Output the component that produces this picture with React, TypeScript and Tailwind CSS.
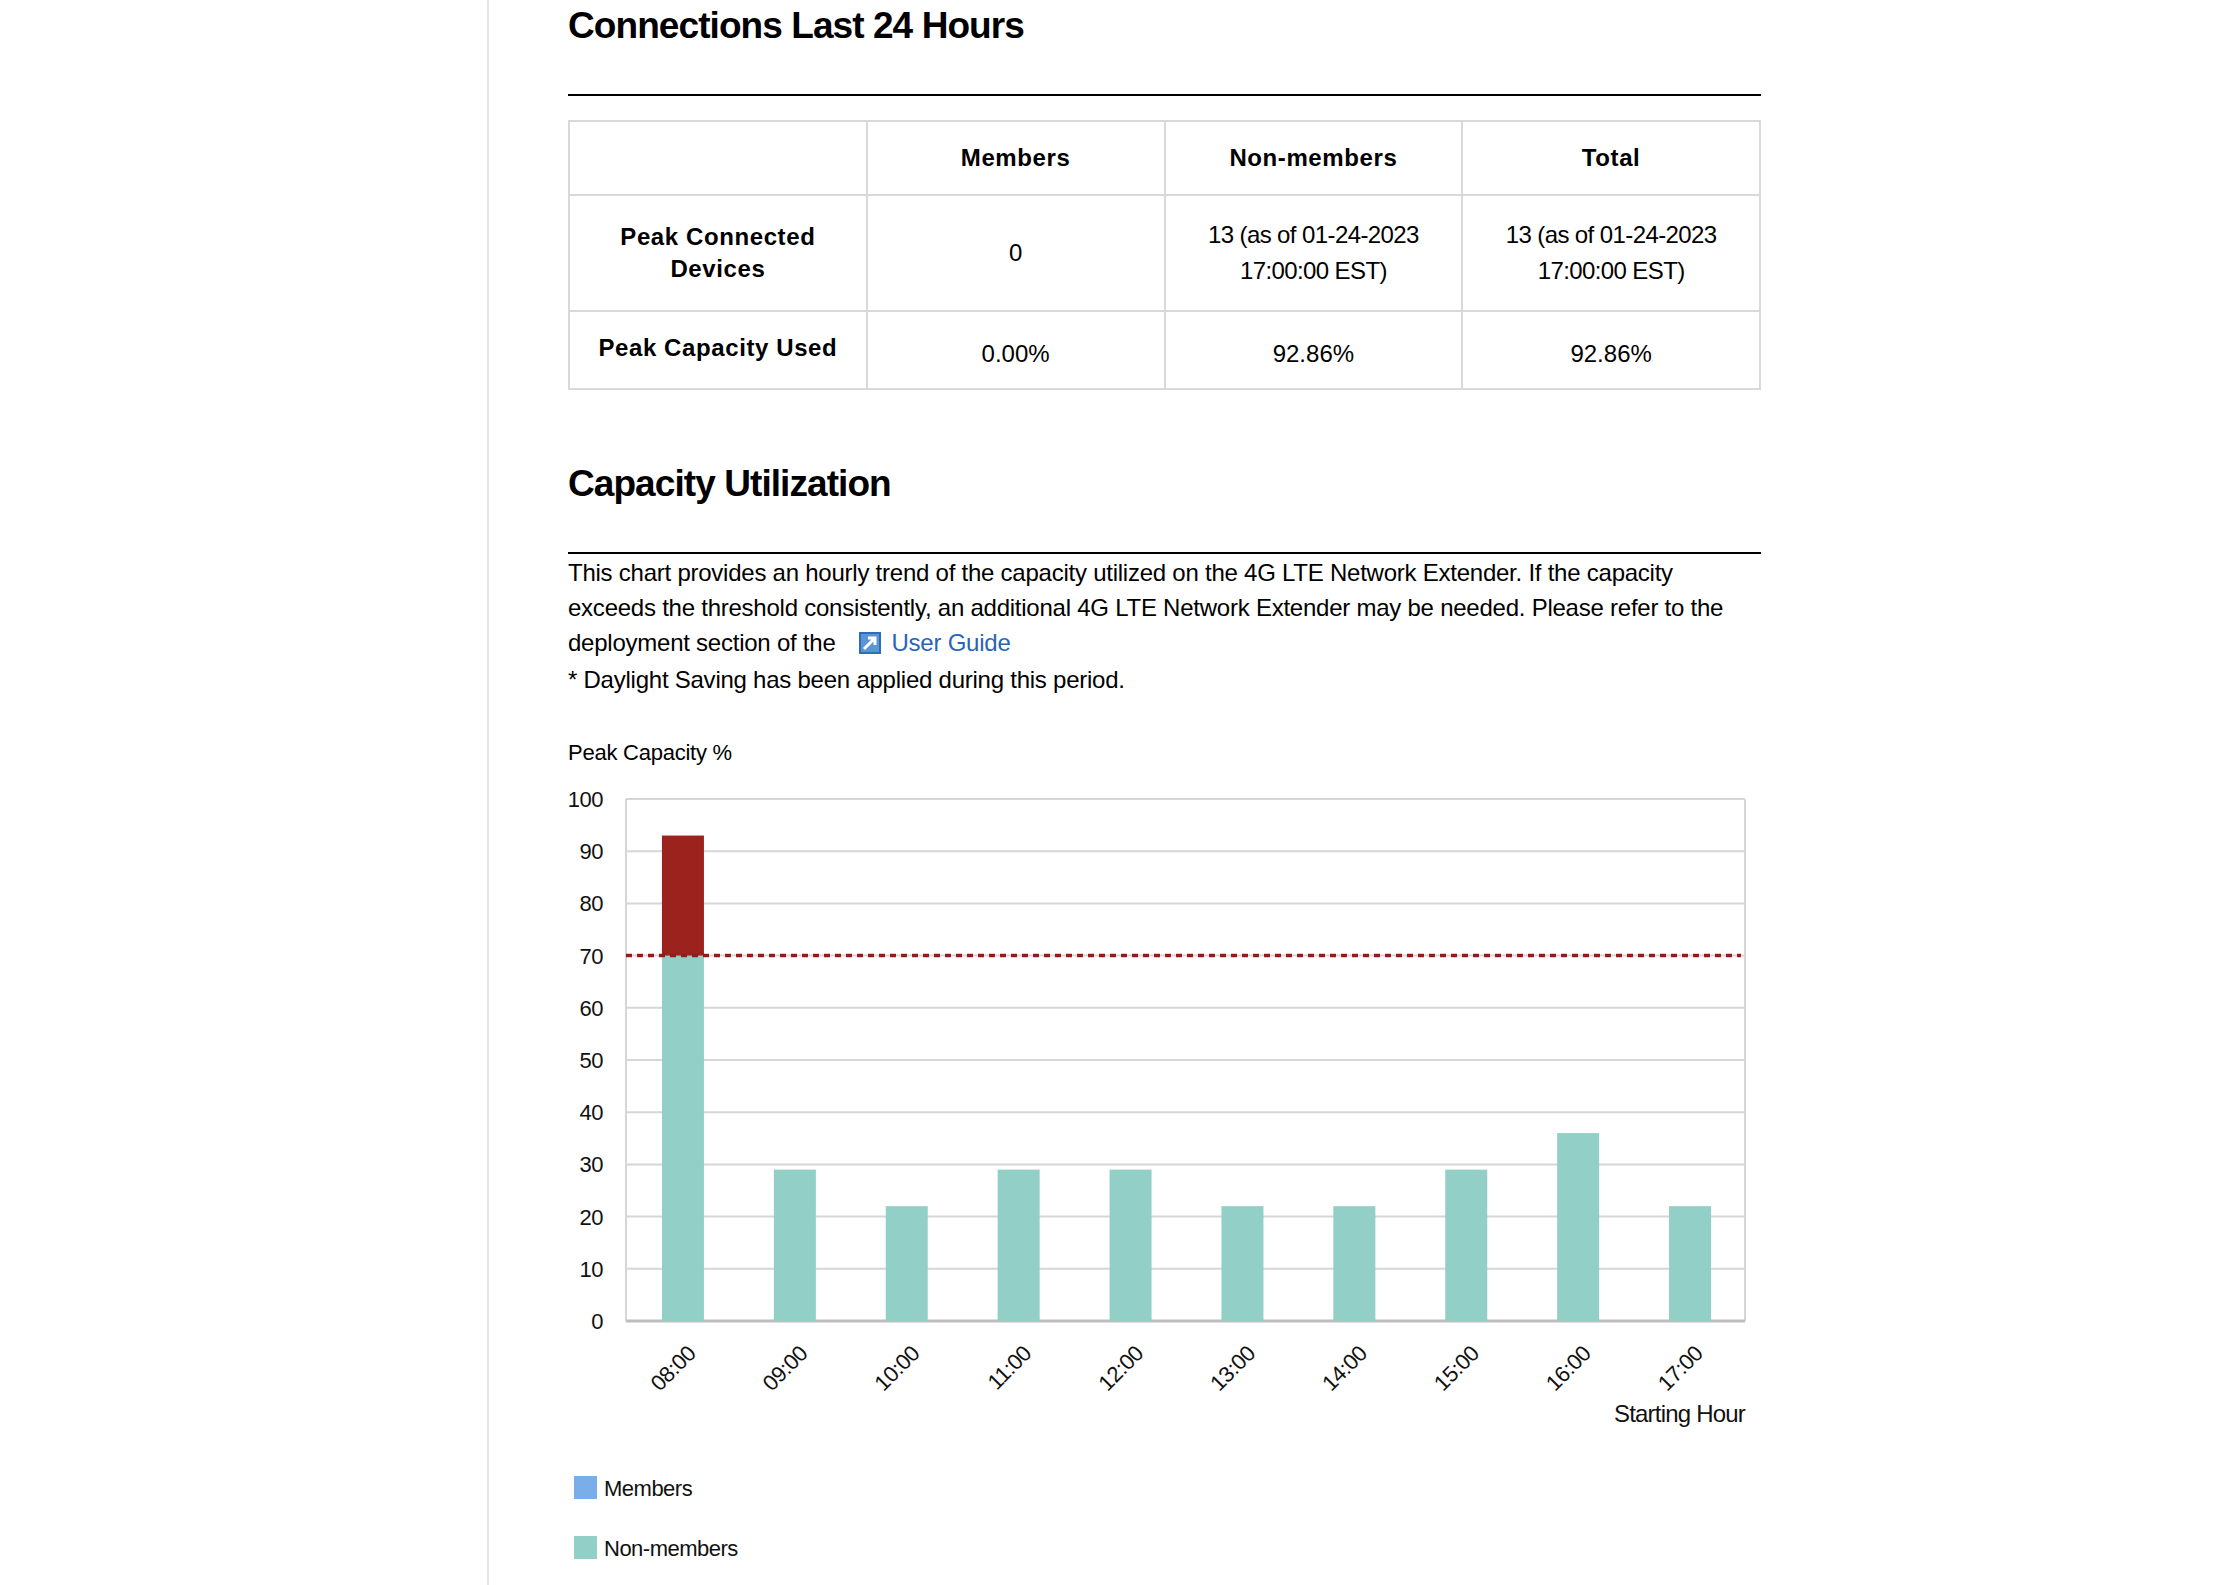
export default function App() {
  const bars = [93, 29, 22, 29, 29, 22, 22, 29, 36, 22];
  const labels = ["08:00","09:00","10:00","11:00","12:00","13:00","14:00","15:00","16:00","17:00"];
  const L = 628, R = 1747, T = 805, B = 1327;
  const W = R - L, H = B - T;
  const y = (v: number) => B - (v / 100) * H;
  const ox = 560;
  const font = { fontFamily: '"Liberation Sans", Arial, sans-serif' };
  return (
    <div className="w-[2223px] h-[1585px] bg-white flex overflow-hidden" style={font}>
      <div className="w-[489px] border-r-2 border-[#e5e5e5] h-full shrink-0" />
      <div className="w-[1193px] ml-[79px] text-black shrink-0">
        <h1 className="text-[37px] font-bold tracking-tight leading-none mt-[7px] h-[87px]">Connections Last 24 Hours</h1>
        <div className="h-[2px] bg-black" />
        <table className="mt-[24px] w-full border-collapse border-2 border-[#d9d9d9] text-center text-[24px]">
          <tbody>
            <tr className="h-[74px] font-bold tracking-wide">
              <td className="border-2 border-[#d9d9d9] w-1/4"></td>
              <td className="border-2 border-[#d9d9d9] w-1/4">Members</td>
              <td className="border-2 border-[#d9d9d9] w-1/4">Non-members</td>
              <td className="border-2 border-[#d9d9d9] w-1/4">Total</td>
            </tr>
            <tr className="h-[116px]">
              <td className="border-2 border-[#d9d9d9] font-bold tracking-wide leading-[32px]">Peak Connected<br />Devices</td>
              <td className="border-2 border-[#d9d9d9]">0</td>
              <td className="border-2 border-[#d9d9d9] leading-[36px] tracking-tight">13 (as of 01-24-2023<br />17:00:00 EST)</td>
              <td className="border-2 border-[#d9d9d9] leading-[36px] tracking-tight">13 (as of 01-24-2023<br />17:00:00 EST)</td>
            </tr>
            <tr className="h-[78px]">
              <td className="border-2 border-[#d9d9d9] font-bold tracking-wide align-top pt-[18px]">Peak Capacity Used</td>
              <td className="border-2 border-[#d9d9d9] pt-[8px]">0.00%</td>
              <td className="border-2 border-[#d9d9d9] pt-[8px]">92.86%</td>
              <td className="border-2 border-[#d9d9d9] pt-[8px]">92.86%</td>
            </tr>
          </tbody>
        </table>
        <h2 className="text-[37px] font-bold tracking-tight leading-none mt-[75px] h-[87px]">Capacity Utilization</h2>
        <div className="h-[2px] bg-black" />
        <div className="text-[24px] tracking-[-0.01em] leading-[35px] mt-[1px] whitespace-nowrap">
          <div>This chart provides an hourly trend of the capacity utilized on the 4G LTE Network Extender. If the capacity</div>
          <div>exceeds the threshold consistently, an additional 4G LTE Network Extender may be needed. Please refer to the</div>
          <div className="flex items-center">
            <span>deployment section of the</span>
            <svg width="24" height="24" viewBox="0 0 24 24" className="ml-[22px] mr-[10px]">
              <rect x="1" y="1" width="22" height="22" fill="#2f6db5" />
              <rect x="3" y="3" width="18" height="18" fill="#5b95d6" />
              <path d="M6 18 L16 8 M10 7 L17 7 L17 14" stroke="white" strokeWidth="3" fill="none" />
            </svg>
            <span className="text-[#2a64b8]">User Guide</span>
          </div>
          <div className="mt-[2px]">* Daylight Saving has been applied during this period.</div>
          <div className="mt-[38px] text-[22px]">Peak Capacity %</div>
        </div>
        <svg width="1240" height="820" viewBox={`${ox} 780 1240 820`} className="block mt-[4px] -ml-[10px]" style={font}>
          {[0,10,20,30,40,50,60,70,80,90,100].map((v) => (
            <g key={v}>
              <line x1={L} x2={R} y1={y(v)} y2={y(v)} stroke="#d6d6d6" strokeWidth="2" />
              <text x={605} y={y(v) + 8} textAnchor="end" fontSize="22" fill="#111" letterSpacing="-0.5">{v}</text>
            </g>
          ))}
          <line x1={L} x2={L} y1={T} y2={B} stroke="#d6d6d6" strokeWidth="2" />
          <line x1={R} x2={R} y1={T} y2={B} stroke="#d6d6d6" strokeWidth="2" />
          <line x1={L} x2={R} y1={B} y2={B} stroke="#bdbdbd" strokeWidth="3" />
          {bars.map((v, i) => {
            const cx = L + (i + 0.5) * (W / 10) + 1;
            const bx = cx - 21;
            return (
              <g key={i}>
                {v > 70 ? (
                  <>
                    <rect x={bx} y={y(70)} width={42} height={B - y(70)} fill="#92d0c7" />
                    <rect x={bx} y={y(v)} width={42} height={y(70) - y(v)} fill="#9c221d" />
                  </>
                ) : (
                  <rect x={bx} y={y(v)} width={42} height={B - y(v)} fill="#92d0c7" />
                )}
                <text x={cx + 14} y={B + 34} textAnchor="end" fontSize="22" fill="#111" letterSpacing="-0.5" transform={`rotate(-45 ${cx + 14} ${B + 34})`}>{labels[i]}</text>
              </g>
            );
          })}
          <line x1={L} x2={R - 4} y1={y(70)} y2={y(70)} stroke="#8e1d1d" strokeWidth="3.5" strokeDasharray="6 5" />
          <text x={R} y={1428} textAnchor="end" fontSize="24" fill="#111" letterSpacing="-0.8">Starting Hour</text>
          <rect x={576} y={1482} width={23} height={23} fill="#7aaee8" />
          <text x={606} y={1502} fontSize="22" fill="#111" letterSpacing="-0.5">Members</text>
          <rect x={576} y={1542} width={23} height={23} fill="#92d0c7" />
          <text x={606} y={1562} fontSize="22" fill="#111" letterSpacing="-0.5">Non-members</text>
        </svg>
      </div>
    </div>
  );
}
